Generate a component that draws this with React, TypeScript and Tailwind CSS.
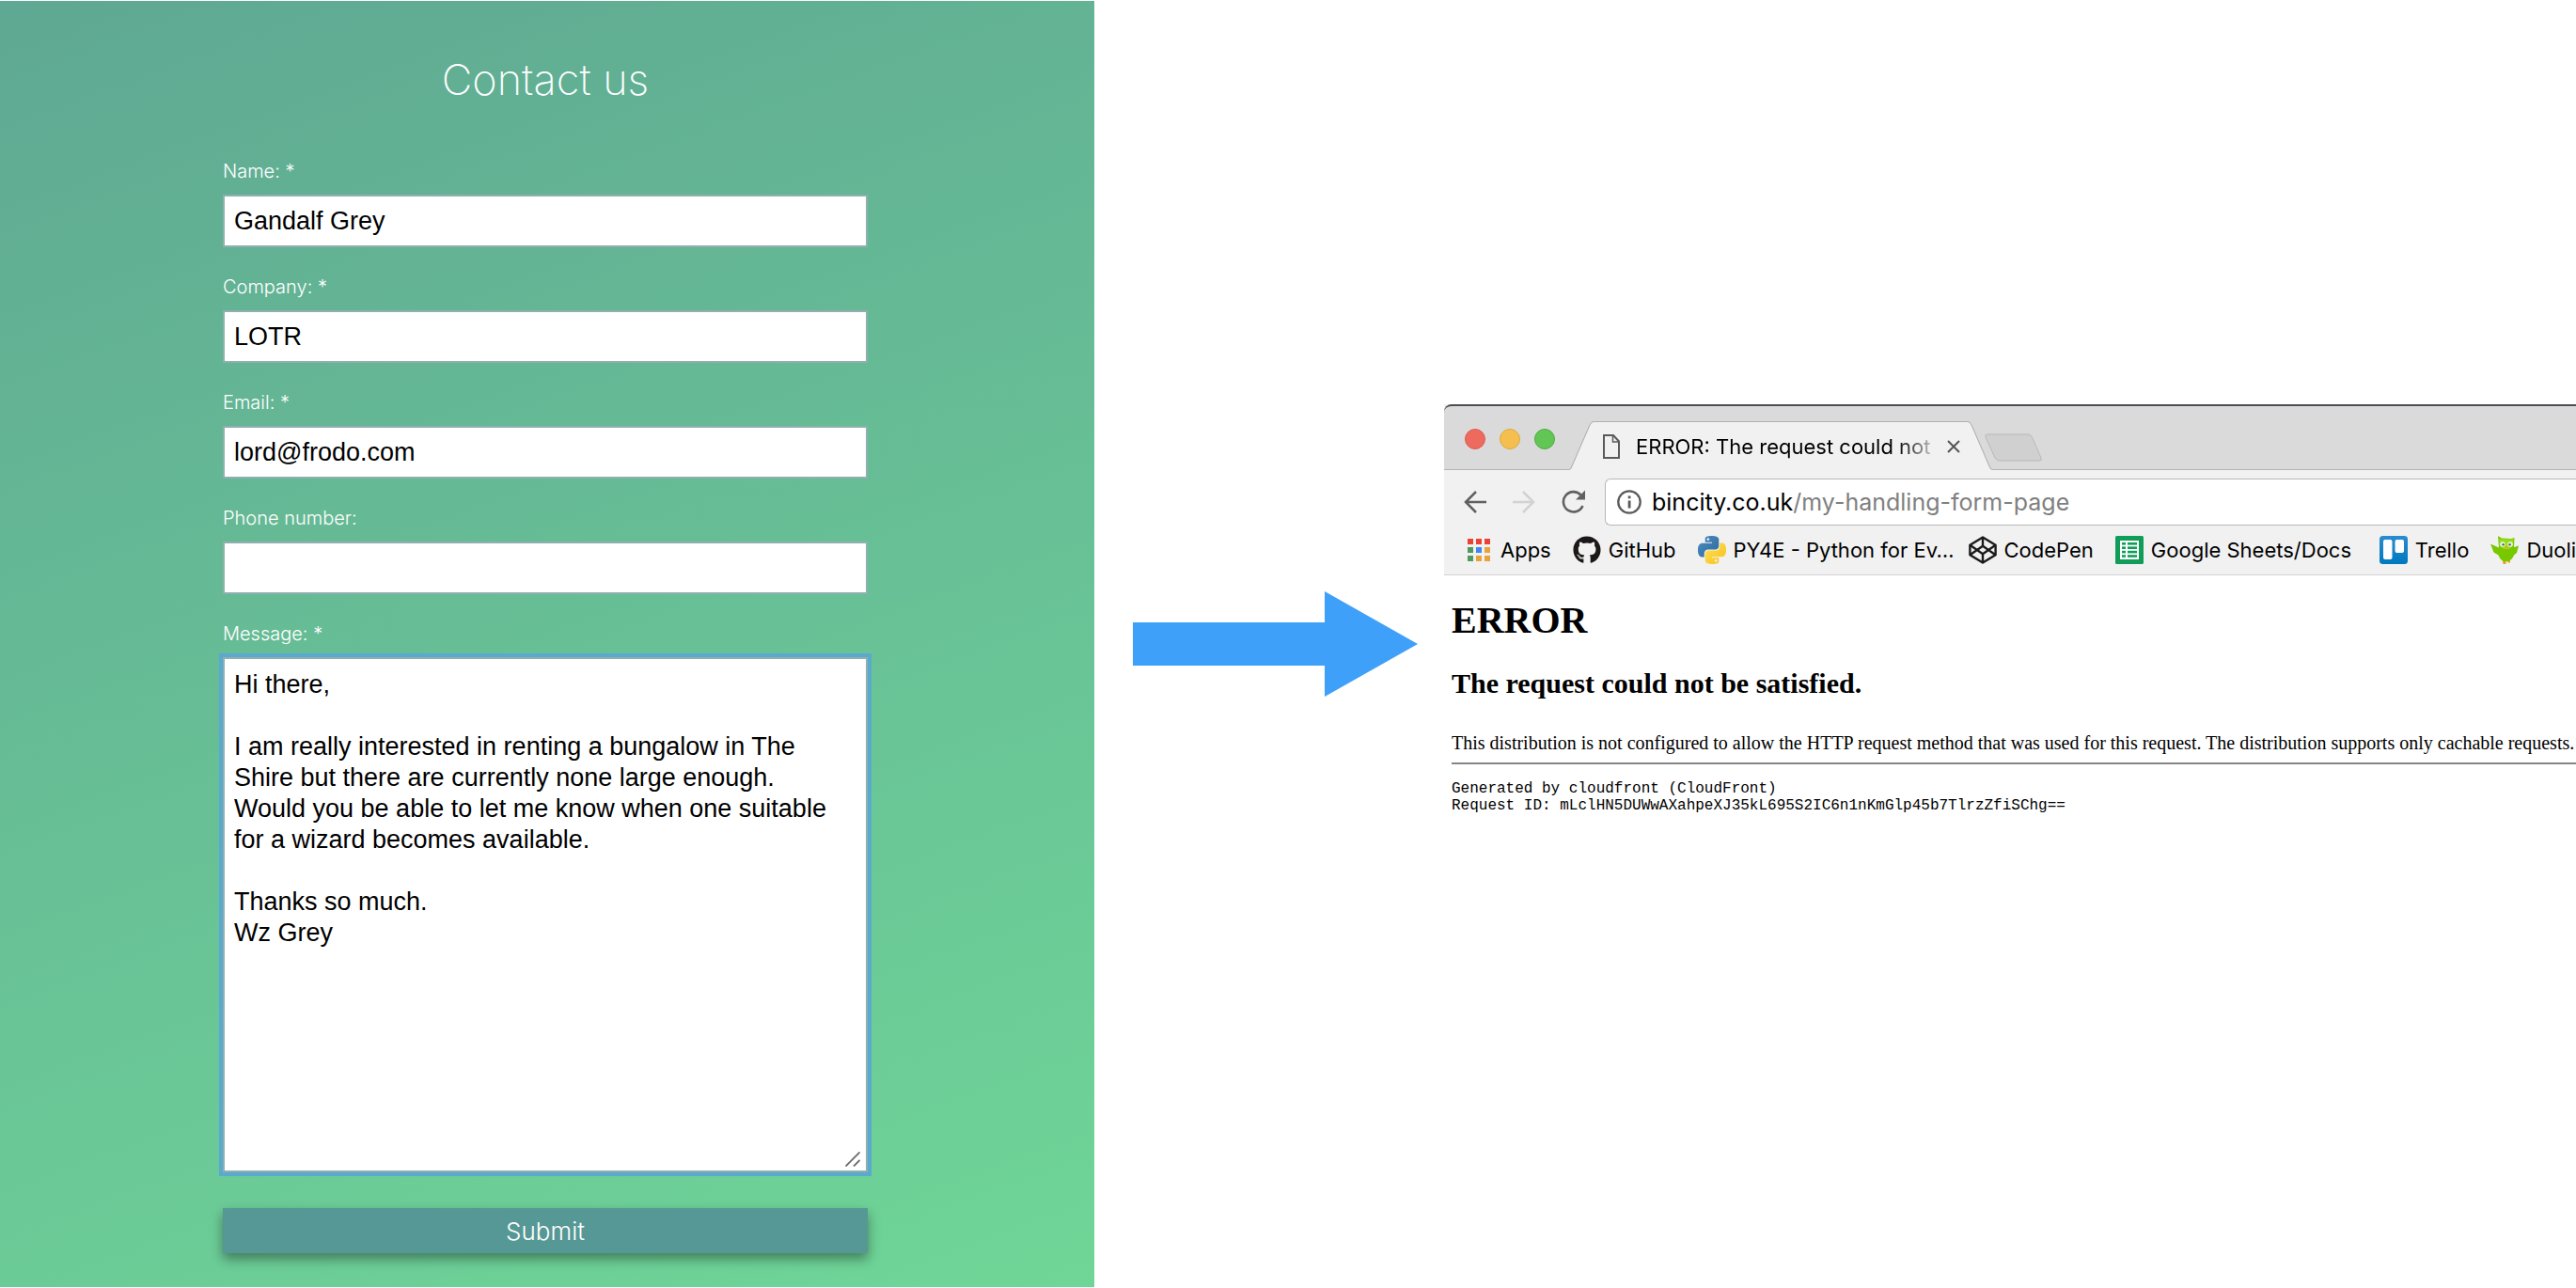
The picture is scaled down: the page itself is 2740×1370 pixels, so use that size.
import { useState } from "react";
import type { ReactNode } from "react";
import { FaGithub } from "react-icons/fa";

const PYTHON_HALF =
  "M14.25.18l.9.2.73.26.59.3.45.32.34.34.25.34.16.33.1.3.04.26.02.2-.01.13V8.5l-.05.63-.13.55-.21.46-.26.38-.3.31-.33.25-.35.19-.35.14-.33.1-.3.07-.26.04-.21.02H8.77l-.69.05-.59.14-.5.22-.41.27-.33.32-.27.35-.2.36-.15.37-.1.35-.07.32-.04.27-.02.21v3.06H3.17l-.21-.03-.28-.07-.32-.12-.35-.18-.36-.26-.36-.36-.35-.46-.32-.59-.28-.73-.21-.88-.14-1.05-.05-1.23.06-1.22.16-1.04.24-.87.32-.71.36-.57.4-.44.42-.33.42-.24.4-.16.36-.1.32-.05.24-.01h.16l.06.01h8.16v-.83H6.18l-.01-2.75-.02-.37.05-.34.11-.31.17-.28.25-.26.31-.23.38-.2.44-.18.51-.15.58-.12.64-.1.71-.06.77-.04.84-.02 1.27.05zm-6.3 1.98l-.23.33-.08.41.08.41.23.34.33.22.41.09.41-.09.33-.22.23-.34.08-.41-.08-.41-.23-.33-.33-.22-.41-.09-.41.09z";

function AppsIcon() {
  const colors = ["#ea4335", "#ea4335", "#ea4335", "#4f9a5d", "#4285f4", "#eaa23a", "#4f9a5d", "#eaa23a", "#eaa23a"];
  return (
    <svg viewBox="0 0 24 24" className="size-6 shrink-0">
      {colors.map((c, i) => (
        <rect key={i} x={(i % 3) * 9} y={Math.floor(i / 3) * 9} width="6" height="6" fill={c} />
      ))}
    </svg>
  );
}

function PythonIcon() {
  return (
    <svg viewBox="0 0 24 24" className="size-[30px] shrink-0">
      <defs>
        <linearGradient id="pyBlue" x1="0" y1="0" x2="1" y2="1">
          <stop offset="0" stopColor="#4b8fc6" />
          <stop offset="1" stopColor="#2f6796" />
        </linearGradient>
        <linearGradient id="pyYellow" x1="0" y1="0" x2="1" y2="1">
          <stop offset="0" stopColor="#f8c01c" />
          <stop offset="1" stopColor="#ffe052" />
        </linearGradient>
      </defs>
      <path d={PYTHON_HALF} fill="url(#pyBlue)" />
      <path d={PYTHON_HALF} fill="url(#pyYellow)" transform="rotate(180 12 12)" />
    </svg>
  );
}

function CodePenIcon() {
  return (
    <svg viewBox="0 0 30 30" className="size-[30px] shrink-0" fill="none" stroke="#1a1a1a" strokeWidth="2.4" strokeLinejoin="round">
      <path d="M15 1.4 28.600 9.800V20.200L15 28.600 1.400 20.200V9.800Z" />
      <path d="M15 1.4V10.800M15 28.600V19.200M28.600 9.800 15 19.200 1.400 9.800M1.400 20.200 15 10.800 28.600 20.200" />
    </svg>
  );
}

function SheetsIcon() {
  return (
    <svg viewBox="0 0 30 30" className="size-[30px] shrink-0">
      <rect width="30" height="30" rx="1.5" fill="#0f9d58" />
      <rect x="5" y="5" width="20" height="20" fill="#fff" />
      <g fill="#0f9d58">
        {[7, 11.4, 15.8, 20.2].map((y) => (
          <g key={y}>
            <rect x="7" y={y} width="4" height="2.6" />
            <rect x="13" y={y} width="10" height="2.6" />
          </g>
        ))}
      </g>
    </svg>
  );
}

function TrelloIcon() {
  return (
    <svg viewBox="0 0 30 30" className="size-[30px] shrink-0">
      <defs>
        <linearGradient id="trello" x1="0" y1="0" x2="0" y2="1">
          <stop offset="0" stopColor="#2a8cd0" />
          <stop offset="1" stopColor="#0079bf" />
        </linearGradient>
      </defs>
      <rect width="30" height="30" rx="3.5" fill="url(#trello)" />
      <rect x="4" y="4" width="9.5" height="21" rx="2" fill="#fff" />
      <rect x="16.5" y="4" width="9.5" height="14" rx="2" fill="#fff" />
    </svg>
  );
}

function OwlIcon() {
  return (
    <svg viewBox="0 0 30 30" className="size-[30px] shrink-0">
      <path d="M13 26h3l.5 4h-3ZM18.500 25.500h2.500v3h-2.500Z" fill="#f49a1c" />
      <path d="M8 0l4 2.500 10 .500L25.500 2 25 12 30 10.500 28 18 25 20.500C23.500 24.500 20.500 27.500 16.500 27.500S10 24.500 8.500 20.500L3.500 17.500 0 8.500 9 12.500Z" fill="#78c800" />
      <path d="M9 3.500h15.500l-.5 7-4 3.500h-6l-4-3.500Z" fill="#93e014" />
      <circle cx="13" cy="9" r="2.800" fill="#e9f5ea" />
      <circle cx="21" cy="9" r="2.800" fill="#e9f5ea" />
      <circle cx="13.600" cy="9.300" r="1.300" fill="#5a6a6a" />
      <circle cx="20.600" cy="9.300" r="1.300" fill="#5a6a6a" />
      <path d="M15.700 11h3.200l-1.200 4.500Z" fill="#f4a51c" />
    </svg>
  );
}

const bookmarks: { label: string; icon: ReactNode; spacing: string }[] = [
  { label: "Apps", icon: <AppsIcon />, spacing: "gap-[11px]" },
  { label: "GitHub", icon: <FaGithub className="size-[30px] shrink-0 text-[#1b1817]" />, spacing: "gap-2" },
  { label: "PY4E - Python for Ev…", icon: <PythonIcon />, spacing: "gap-2 w-[265px]" },
  { label: "CodePen", icon: <CodePenIcon />, spacing: "gap-2" },
  { label: "Google Sheets/Docs", icon: <SheetsIcon />, spacing: "gap-2 w-[258px]" },
  { label: "Trello", icon: <TrelloIcon />, spacing: "gap-2" },
  { label: "Duolingo", icon: <OwlIcon />, spacing: "gap-2" },
];

function Field({ id, label, value, type = "text" }: { id: string; label: string; value: string; type?: string }) {
  const [text, setText] = useState(value);
  return (
    <div className="mb-[25px] flex flex-col">
      <label htmlFor={id} className="mb-2 font-[Inter,sans-serif] text-[20px] leading-[34px] font-light text-white">
        {label}
      </label>
      <input
        id={id}
        type={type}
        value={text}
        onChange={(e) => setText(e.target.value)}
        className="h-14 w-full border-2 border-[#8fb0ae] bg-white px-[10px] text-[27px] text-black outline-none"
      />
    </div>
  );
}

function ContactForm() {
  const [message, setMessage] = useState(
    "Hi there,\n\nI am really interested in renting a bungalow in The Shire but there are currently none large enough. Would you be able to let me know when one suitable for a wizard becomes available.\n\nThanks so much.\nWz Grey",
  );
  return (
    <section className="my-px bg-linear-160 from-[#5fa893] to-[#6fd697] pt-[47px] pr-7 pl-6">
      <form className="mx-auto w-full max-w-[686px] font-['Liberation_Sans',Arial,sans-serif]" onSubmit={(e) => e.preventDefault()}>
        <h1 className="mb-11 text-center font-[Inter,sans-serif] text-[45px] leading-[73px] font-extralight text-white">Contact us</h1>
        <Field id="name" label="Name: *" value="Gandalf Grey" />
        <Field id="company" label="Company: *" value="LOTR" />
        <Field id="email" label="Email: *" value="lord@frodo.com" type="email" />
        <Field id="phone" label="Phone number:" value="" type="tel" />
        <div className="relative flex flex-col">
          <label htmlFor="message" className="mb-2 font-[Inter,sans-serif] text-[20px] leading-[34px] font-light text-white">
            Message: *
          </label>
          <textarea
            id="message"
            value={message}
            onChange={(e) => setMessage(e.target.value)}
            className="h-[548px] w-full resize-none border-2 border-[#8fb0ae] bg-white py-[11px] pr-5 pl-[10px] text-[27px] leading-[33px] text-black ring-4 ring-[#5aa9cf] outline-none"
          />
          <svg viewBox="0 0 16 16" className="pointer-events-none absolute right-2 bottom-1.5 size-4" stroke="#6b6b6b" strokeWidth="1.800">
            <path d="M.500 15.500 15.500.500M9 15.500 15.500 9" />
          </svg>
        </div>
        <button
          type="submit"
          className="mt-[38px] h-12 w-full bg-[#569895] font-[Inter,sans-serif] text-[26px] font-light text-white shadow-[0_6px_12px_rgba(0,0,0,0.4)]"
        >
          Submit
        </button>
      </form>
    </section>
  );
}

function TabStrip() {
  return (
    <div className="flex h-[70px] items-end overflow-hidden rounded-tl-lg border-t-2 border-[#4b4d52] bg-[#dadada]">
      <div className="flex h-full w-[133px] shrink-0 items-center gap-[15px] border-b border-[#b4b4b4] pt-0.5 pl-[22px]">
        <button aria-label="Close window" className="size-[22px] rounded-full border border-[#dd5a50] bg-[#ee6a5f]" />
        <button aria-label="Minimise window" className="size-[22px] rounded-full border border-[#e0a73e] bg-[#f5bf4f]" />
        <button aria-label="Zoom window" className="size-[22px] rounded-full border border-[#4eab40] bg-[#62c655]" />
      </div>
      <svg viewBox="0 0 26 52" className="h-[52px] w-[26px] shrink-0">
        <path d="M0 52V51.500Q1.500 51.500 2.500 49L22 4Q23.500.500 26 .500V52Z" fill="#f1f1f1" />
        <path d="M0 51.500Q1.500 51.500 2.500 49L22 4Q23.500.500 26 .500" fill="none" stroke="#a9a9a9" />
      </svg>
      <div className="flex h-[52px] w-[398px] shrink-0 items-center border-t border-[#b0b0b0] bg-[#f1f1f1] pl-[10px]">
        <svg viewBox="0 0 18 26" className="h-[26px] w-[18px] shrink-0" fill="none" stroke="#5a5a5a" strokeWidth="2">
          <path d="M1 1H11L17 7.500V25H1Z" />
          <path d="M10.500 1V8H17" strokeWidth="1.500" />
        </svg>
        <span className="ml-[17px] w-[318px] overflow-hidden bg-linear-to-r from-black from-85% to-[#d0d0d0] bg-clip-text text-[22px] leading-8 whitespace-nowrap text-transparent">
          ERROR: The request could not
        </span>
        <button aria-label="Close tab" className="ml-[13px]">
          <svg viewBox="0 0 14 14" className="size-[14px]" stroke="#555" strokeWidth="2">
            <path d="M1 1 13 13M13 1 1 13" />
          </svg>
        </button>
      </div>
      <svg viewBox="0 0 26 52" className="h-[52px] w-[26px] shrink-0">
        <path d="M26 52V51.500Q24.500 51.500 23.500 49L4 4Q2.500.500 0 .500V52Z" fill="#f1f1f1" />
        <path d="M26 51.500Q24.500 51.500 23.500 49L4 4Q2.500.500 0 .500" fill="none" stroke="#a9a9a9" />
      </svg>
      <div className="flex h-full flex-1 items-end border-b border-[#b4b4b4] pb-2">
        <button aria-label="New tab" className="-ml-2">
          <svg viewBox="0 0 61 30" className="h-[30px] w-[61px]" fill="#d0d0d0" stroke="#b9b9b9">
            <path d="M3 1H46Q49 1 50.500 4L60 26Q61 29 58.500 29H16Q12.500 29 11 26L1 4Q0 1 3 1Z" />
          </svg>
        </button>
      </div>
    </div>
  );
}

function Toolbar() {
  return (
    <div className="flex h-[68px] items-center pl-[21px]">
      <button aria-label="Back">
        <svg viewBox="0 0 24 24" className="size-6" fill="none" stroke="#606060" strokeWidth="2.500">
          <path d="M24 12H2M13 1 2 12 13 23" />
        </svg>
      </button>
      <button aria-label="Forward" className="ml-7">
        <svg viewBox="0 0 24 24" className="size-6" fill="none" stroke="#d2d2d2" strokeWidth="2.500">
          <path d="M0 12H22M11 1 22 12 11 23" />
        </svg>
      </button>
      <button aria-label="Reload" className="ml-7">
        <svg viewBox="0 0 26 26" className="size-[26px]">
          <path d="M22.500 17A10.700 10.700 0 1 1 20.500 5.500" fill="none" stroke="#606060" strokeWidth="2.600" />
          <path d="M25 .500V10.500H15Z" fill="#606060" />
        </svg>
      </button>
      <div className="ml-5 flex h-[50px] flex-1 items-center rounded-l-md border border-r-0 border-[#b8b8b8] bg-white pl-3">
        <svg viewBox="0 0 26 26" className="size-[26px] shrink-0" role="img" aria-label="Site information">
          <circle cx="13" cy="13" r="11.700" fill="none" stroke="#5a5a5a" strokeWidth="2.300" />
          <path d="M11.700 6.500h2.800v2.800h-2.800ZM11.700 11.500h2.800v8h-2.800Z" fill="#5a5a5a" />
        </svg>
        <a href="#page" className="mt-0.5 ml-[11px] text-[25px] whitespace-nowrap text-[#808080]">
          <span className="text-black">bincity.co.uk</span>/my-handling-form-page
        </a>
      </div>
    </div>
  );
}

function BrowserWindow() {
  return (
    <section className="mt-[430px] min-w-0 overflow-hidden">
      <div className="border-b border-[#d4d4d4] bg-[#f1f1f1] font-[Inter,sans-serif]">
        <TabStrip />
        <Toolbar />
        <nav className="flex h-[43px] items-start gap-[23px] overflow-hidden pt-[2px] pl-[25px]">
          {bookmarks.map((b) => (
            <a key={b.label} href="#bookmark" className={`flex h-[30px] shrink-0 items-center text-[22px] whitespace-nowrap text-black ${b.spacing}`}>
              {b.icon}
              {b.label}
            </a>
          ))}
        </nav>
      </div>
      <article className="pl-2 font-['Liberation_Serif','Times_New_Roman',serif] text-black">
        <h1 className="mt-[25px] text-[40px] leading-[46px] font-bold">ERROR</h1>
        <h2 className="mt-[27px] text-[30px] leading-[34px] font-bold">The request could not be satisfied.</h2>
        <p className="mt-[34px] text-[20px] leading-6 xl:whitespace-nowrap">
          This distribution is not configured to allow the HTTP request method that was used for this request. The distribution supports only
          cachable requests.
        </p>
        <hr className="mt-[9px] border-t-2 border-[#868686]" />
        <pre className="mt-[17px] font-['Liberation_Mono','Courier_New',monospace] text-[16px] leading-[18px]">
          {"Generated by cloudfront (CloudFront)\nRequest ID: mLclHN5DUWwAXahpeXJ35kL695S2IC6n1nKmGlp45b7TlrzZfiSChg=="}
        </pre>
      </article>
    </section>
  );
}

export default function App() {
  return (
    <main className="grid min-h-screen grid-cols-[1164fr_372fr_1204fr] bg-white">
      <ContactForm />
      <div className="flex items-center pr-7 pl-[41px]">
        <svg viewBox="0 0 303 112" className="w-full" fill="#3fa0f9" role="img" aria-label="leads to">
          <path d="M0 33H204V0L303 56 204 112V79H0Z" />
        </svg>
      </div>
      <BrowserWindow />
    </main>
  );
}
